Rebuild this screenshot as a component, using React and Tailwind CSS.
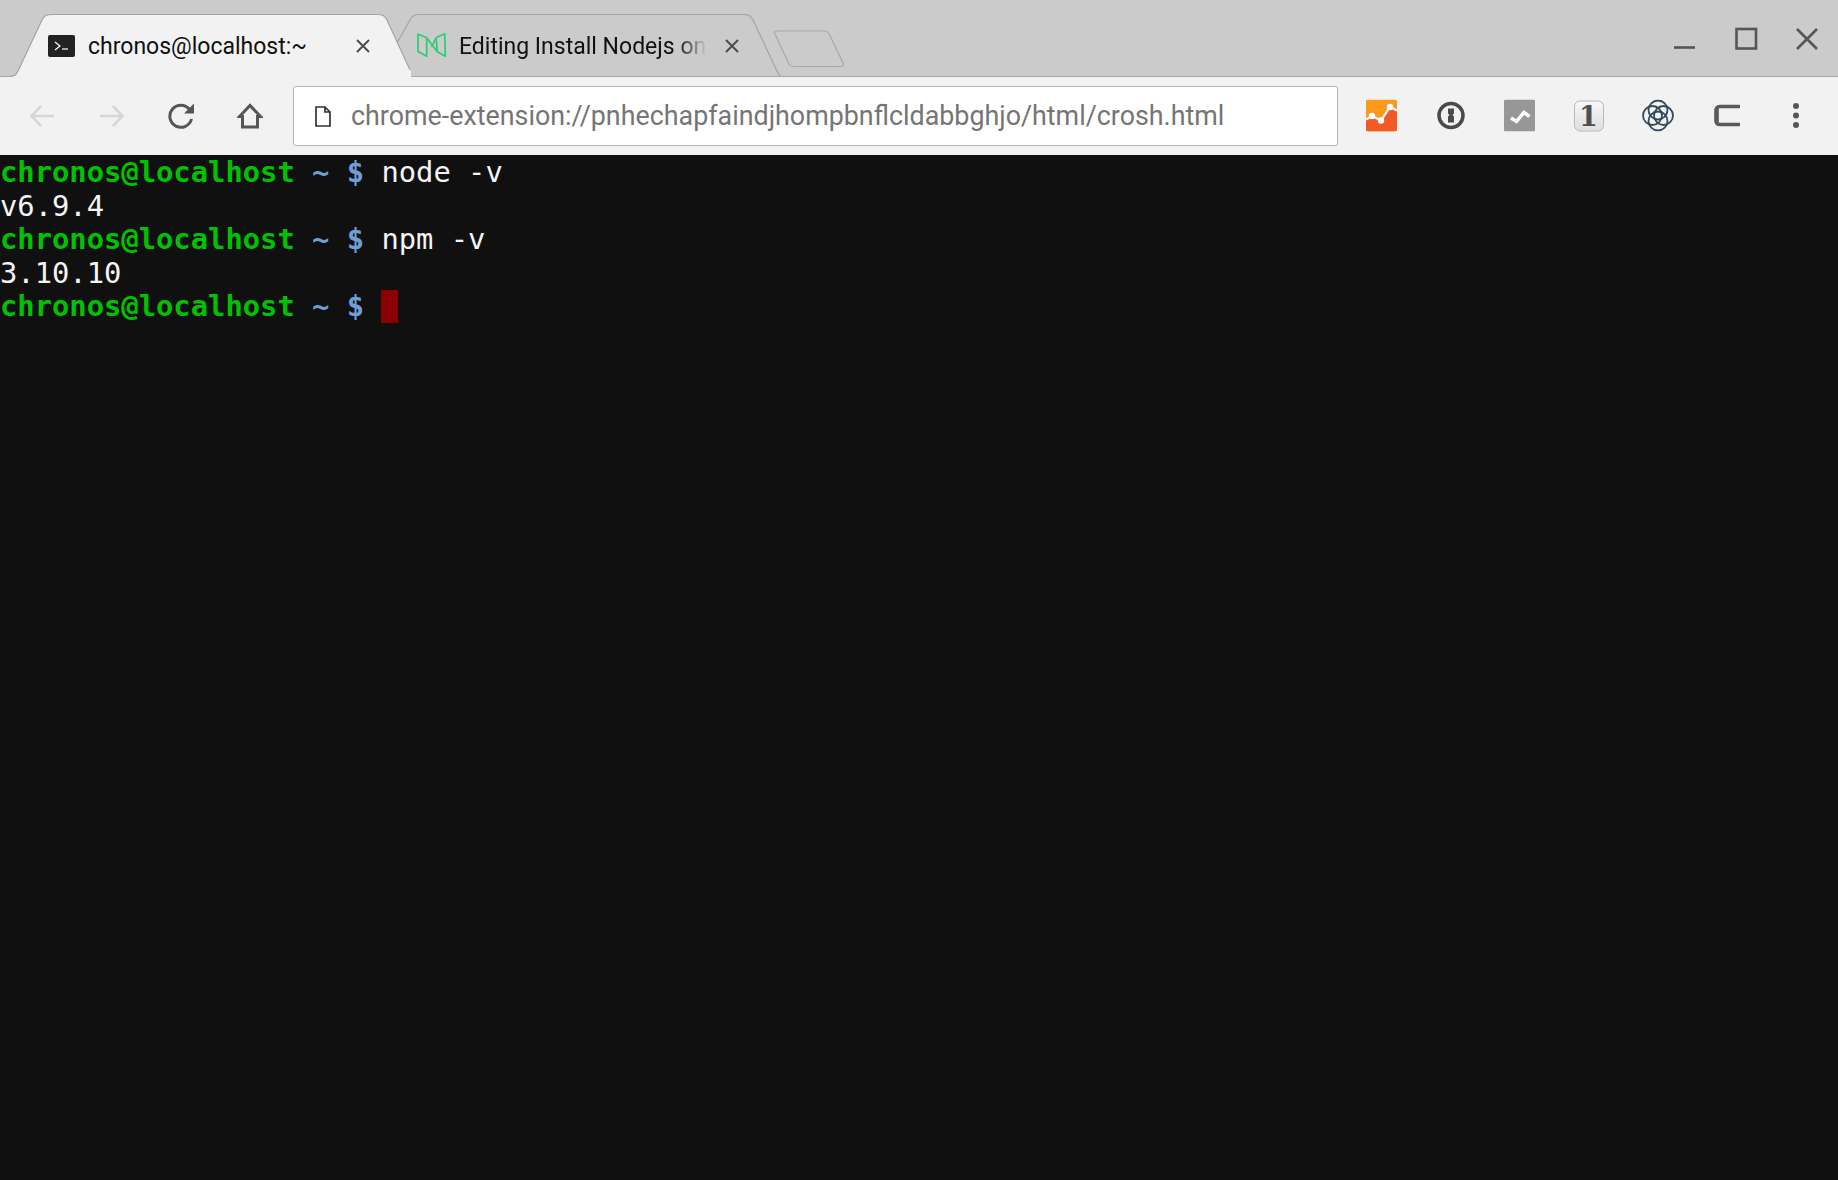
import React from "react";

function TerminalIcon() {
  return (
    <svg width="27" height="22" viewBox="0 0 27 22" className="shrink-0">
      <rect x="0" y="0" width="27" height="22" rx="2" fill="#222" />
      <path d="M7 7l5 4-5 4" fill="none" stroke="#fff" strokeWidth="1.2" />
      <path d="M14 14h6" stroke="#fff" strokeWidth="1.2" />
    </svg>
  );
}

function MediumIcon() {
  return (
    <svg width="30" height="25" viewBox="0 0 30 25" fill="none" stroke="#2ecc71" strokeWidth="1.7" strokeLinejoin="round" className="shrink-0">
      <path d="M1 1l8.700 3.800V23.200L1 18.500z" />
      <path d="M19 4.800L27.700 0.800L28.300 23.200L20.300 18.800L9.700 4.800" />
      <path d="M19 4.800L20.300 18.800" />
      <path d="M19 4.800L14.500 14" />
    </svg>
  );
}

function CloseX() {
  return (
    <svg width="16" height="16" viewBox="0 0 16 16" className="shrink-0">
      <path d="M2 2l12 12M14 2L2 14" stroke="#4d4d4d" strokeWidth="2" />
    </svg>
  );
}

function Toolbtn({ children }) {
  return <div className="w-[69px] h-[30px] flex items-center justify-center shrink-0">{children}</div>;
}

function Line({ children }) {
  return <div className="h-[33.6px] leading-[33.6px] whitespace-pre">{children}</div>;
}

function Prompt() {
  return (
    <>
      <span className="font-bold text-[#00c200]">chronos@localhost</span>
      <span className="font-bold text-[#6f9fd8]"> ~ $ </span>
    </>
  );
}

export default function App() {
  return (
    <div className="w-full h-screen flex flex-col overflow-hidden bg-[#101010] font-['Roboto',sans-serif]">
      {/* Tab strip */}
      <div className="h-[77px] shrink-0 bg-[#cbcbcb] flex relative border-b border-[#a8a8a8]">
        <div className="relative z-10 w-[401px] ml-[10px] h-full shrink-0 flex items-center pl-[38px] pt-[15px]">
          <svg className="absolute left-0 top-0" width="401" height="78" viewBox="0 0 401 78">
            <path d="M0 77 C5 76 6 75 8 71 L32 20 C34 16 36 14.5 42 14.5 L367 14.5 C373 14.5 375 16 377 20 L401 71 L410 77 Z" fill="#f2f2f2" />
            <path d="M0 76.5 C5 76 6 75 8 71 L32 20 C34 16 36 14.5 42 14.5 L367 14.5 C373 14.5 375 16 377 20 L400 70" fill="none" stroke="#a3a3a3" strokeWidth="1.2" />
          </svg>
          <div className="relative flex items-center">
            <TerminalIcon />
            <span className="ml-[13px] mt-[4px] w-[267px] text-[23px] text-[#111] whitespace-nowrap">chronos@localhost:~</span>
            <CloseX />
          </div>
        </div>
        <div className="relative w-[385px] -ml-[15px] h-full shrink-0 flex items-center pl-[21px] pt-[15px]">
          <svg className="absolute left-0 top-0" width="385" height="77" viewBox="0 0 385 77" fill="none">
            <path d="M1 43 L14 20 C16 16 18 14.5 24 14.5 L347 14.5 C353 14.5 355 16 357 20 L381 71 C383 75 384 76 385 76" stroke="#a3a3a3" strokeWidth="1.2" />
          </svg>
          <div className="relative flex items-center">
            <MediumIcon />
            <span className="ml-[12px] mt-[4px] w-[248px] text-[23px] text-[#111] whitespace-nowrap [mask-image:linear-gradient(to_right,black_88%,transparent)]">Editing Install Nodejs on</span>
            <span className="ml-[17px]"><CloseX /></span>
          </div>
        </div>
        <svg className="ml-[-8px] mt-[30px] shrink-0" width="72" height="38" viewBox="0 0 72 38" fill="none">
          <path d="M4 1 L52 1 C54 1 55 2 56 3.5 L70 33 C71 35.5 70 36.500 68 36.500 L20 36.500 C18 36.500 17 35.500 16 34 L2 4 C1 2 2 1 4 1 Z" stroke="#a8a8a8" strokeWidth="1.2" />
        </svg>
        <div className="ml-auto flex items-start h-full">
          <svg width="170" height="77" viewBox="0 0 170 77" fill="none" stroke="#555" strokeWidth="2.6">
            <path d="M6 47.5H27" />
            <rect x="68.500" y="29" width="19.500" height="19.500" />
            <path d="M129 29l20 20M149 29l-20 20" />
          </svg>
        </div>
      </div>

      {/* Toolbar */}
      <div className="h-[78px] shrink-0 bg-[#f2f2f2] flex items-center pl-[8px]">
        <Toolbtn>
          <svg width="26" height="24" viewBox="0 0 26 24" fill="none" stroke="#d6d6d6" strokeWidth="2.6" className="-translate-x-[1px]">
            <path d="M25 12H3M12 2L2.5 12l9.500 10" />
          </svg>
        </Toolbtn>
        <Toolbtn>
          <svg width="26" height="24" viewBox="0 0 26 24" fill="none" stroke="#d6d6d6" strokeWidth="2.6">
            <path d="M1 12h22M14 2l9.500 10-9.500 10" />
          </svg>
        </Toolbtn>
        <Toolbtn>
          <svg width="28" height="26" viewBox="0 0 28 26" fill="none">
            <path d="M22.500 6.500A11 11 0 1 0 24.500 16" stroke="#555" strokeWidth="3" />
            <path d="M27 0.500V10.500H17Z" fill="#555" />
          </svg>
        </Toolbtn>
        <Toolbtn>
          <svg width="26" height="26" viewBox="0 0 26 26" fill="none" stroke="#555" strokeWidth="3" strokeLinejoin="miter">
            <path d="M2.500 13.500L13 2.500l10.500 11h-3V24H5.500V13.500z" />
          </svg>
        </Toolbtn>

        <div className="ml-[9px] w-[1045px] h-[60px] bg-white rounded-[3px] border border-[#b4b4b4] flex items-center shrink-0">
          <svg width="16" height="21" viewBox="0 0 16 21" fill="none" stroke="#333" strokeWidth="1.700" className="ml-[21px] shrink-0">
            <path d="M1 1h9l5 5v14H1zM10 1v5h5" />
          </svg>
          <span className="ml-[20px] pt-[1px] text-[26.850px] text-[#757575] whitespace-nowrap">chrome-extension://pnhechapfaindjhompbnflcldabbghjo/html/crosh.html</span>
        </div>

        <div className="ml-[9px] -translate-y-[0.5px] flex items-center">
          <Toolbtn>
            <svg width="31" height="32" viewBox="0 0 31 32">
              <rect width="31" height="32" rx="2" fill="#f99a1c" />
              <path d="M0 32V20L6 16.500 15 21 24 7.500 31 11V30a2 2 0 0 1-2 2H2a2 2 0 0 1-2-2z" fill="#f15a22" />
              <path d="M0 20L6 16.500 15 21 24 7.500 31 11" fill="none" stroke="#fff" strokeWidth="2.200" />
              <circle cx="6" cy="16.500" r="3.200" fill="#fff" />
              <circle cx="15" cy="21" r="3.200" fill="#fff" />
              <circle cx="24" cy="7.500" r="3.200" fill="#fff" />
            </svg>
          </Toolbtn>
          <Toolbtn>
            <svg width="30" height="30" viewBox="0 0 30 30">
              <circle cx="15" cy="15" r="12" fill="none" stroke="#4a4a4a" strokeWidth="3.500" />
              <path d="M12 8h6v5l-1.500 1.500 1.500 1.500v6h-6v-6l1.500-1.500-1.500-1.500z" fill="#4a4a4a" />
            </svg>
          </Toolbtn>
          <Toolbtn>
            <svg width="31" height="32" viewBox="0 0 31 32">
              <rect width="31" height="32" rx="1.500" fill="#979797" />
              <path d="M7 18.500l5.500 3.500 7.500-9 5.500 4" fill="none" stroke="#fff" strokeWidth="3.500" />
            </svg>
          </Toolbtn>
          <Toolbtn>
            <div className="w-[30px] h-[31px] rounded-[6px] border border-[#b8b8b8] bg-linear-to-b from-[#f8f8f8] to-[#dedede] flex items-center justify-center overflow-hidden font-['DejaVu_Serif',serif] font-bold text-[27px] leading-none text-[#4f4f4f]">
              1
            </div>
          </Toolbtn>
          <Toolbtn>
            <svg width="32" height="32" viewBox="0 0 32 32" fill="none" stroke="#34495e" strokeWidth="1.800">
              <circle cx="21.500" cy="16" r="9.500" />
              <circle cx="10.500" cy="16" r="9.500" />
              <circle cx="16" cy="10.500" r="9.500" />
              <circle cx="16" cy="21.500" r="9.500" />
            </svg>
          </Toolbtn>
          <Toolbtn>
            <svg width="26" height="24" viewBox="0 0 26 24" fill="none">
              <path d="M25 3H6C4 3 2.500 4 2.500 6V18C2.500 20 4 21 6 21H25" stroke="#5a5a5a" strokeWidth="3.600" strokeLinecap="round" />
              <path d="M2.500 5V19" stroke="#5a5a5a" strokeWidth="4.500" />
            </svg>
          </Toolbtn>
          <Toolbtn>
            <svg width="8" height="26" viewBox="0 0 8 26" fill="#555">
              <circle cx="4" cy="3.500" r="3" />
              <circle cx="4" cy="13" r="3" />
              <circle cx="4" cy="22.500" r="3" />
            </svg>
          </Toolbtn>
        </div>
      </div>

      {/* Terminal */}
      <div className="flex-1 bg-[#101010] pt-[1px] text-[#f4f4f4] text-[28.800px] font-['DejaVu_Sans_Mono',monospace]">
        <Line><Prompt />node -v</Line>
        <Line>v6.9.4</Line>
        <Line><Prompt />npm -v</Line>
        <Line>3.10.10</Line>
        <Line>
          <Prompt />
          <span className="inline-block align-top w-[17px] h-[33px] bg-[#8b0000]" />
        </Line>
      </div>
    </div>
  );
}
